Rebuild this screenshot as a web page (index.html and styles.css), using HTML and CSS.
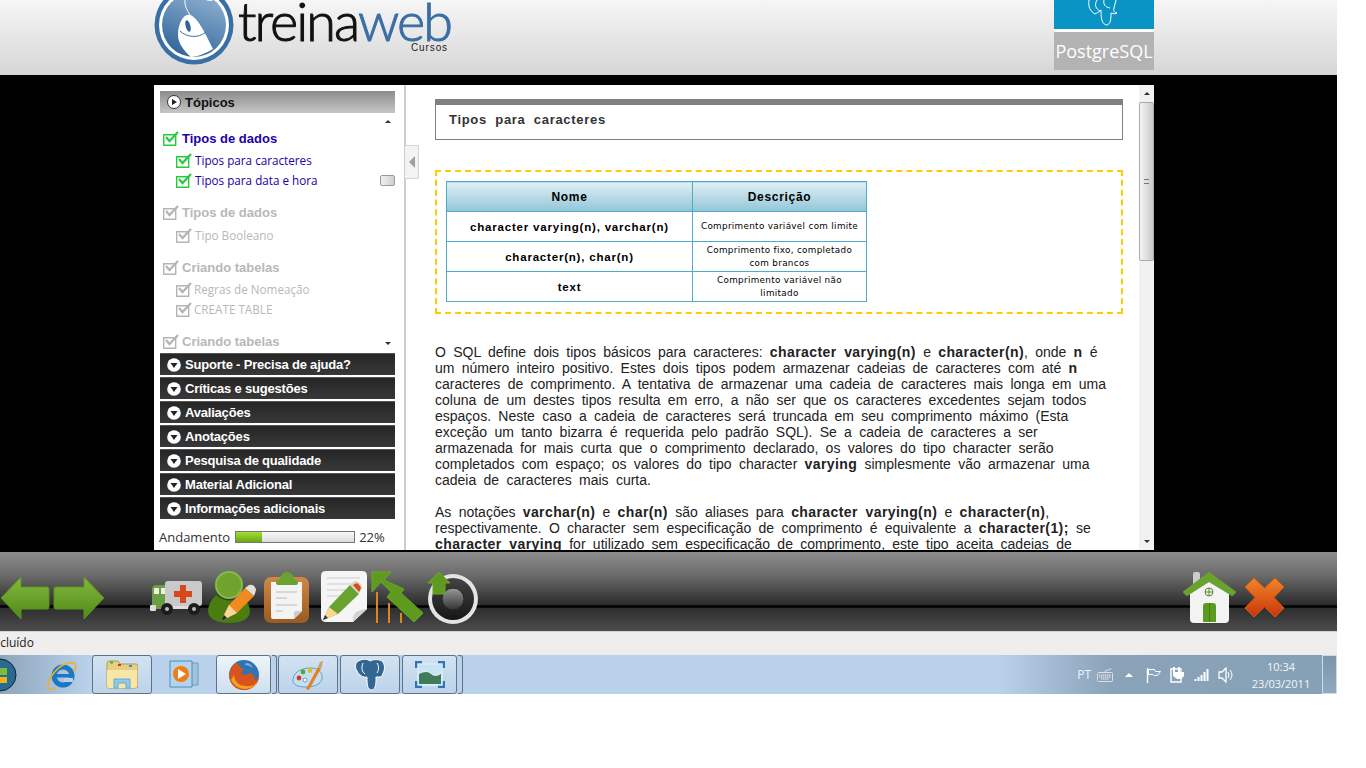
FILE: index.html
```html
<!DOCTYPE html>
<html lang="pt">
<head>
    <meta charset="UTF-8">
    <meta name="viewport" content="width=device-width, initial-scale=1.0">
    <title>TreinaWeb - PostgreSQL</title>
    <link rel="stylesheet" href="styles.css">
</head>
<body>
<svg class="sprites" aria-hidden="true">
    <symbol id="check" viewBox="0 0 16 15">
        <path d="M.7 3.700h12v10.600H.7z" fill="#fff" stroke="currentColor" stroke-width="1.400"/>
        <path d="M3 6 6.500 10 15 1" fill="none" stroke="currentColor" stroke-width="2.200"/>
    </symbol>
    <symbol id="round-right" viewBox="0 0 14 14">
        <circle cx="7" cy="7" r="6.500" fill="#fff" stroke="#333"/>
        <path d="M5 4v6l5-3z" fill="#222"/>
    </symbol>
    <symbol id="round-down" viewBox="0 0 14 14">
        <circle cx="7" cy="7" r="6.800" fill="#fff"/>
        <path d="M3.500 5h7L7 10z" fill="#222"/>
    </symbol>
</svg>

<div class="screen">
    <header class="site-header">
        <svg class="logo-mark" width="80" height="80" viewBox="0 0 80 80">
            <defs>
                <linearGradient id="logoBlue" x1="0.7" y1="0" x2="0.3" y2="1">
                    <stop offset="0" stop-color="#8fb0d0"/>
                    <stop offset="1" stop-color="#2f6499"/>
                </linearGradient>
            </defs>
            <circle cx="40" cy="40" r="39.500" fill="#3a6fa5"/>
            <circle cx="40" cy="40" r="35" fill="#fff"/>
            <circle cx="40" cy="40" r="32" fill="url(#logoBlue)"/>
            <path d="M24 50C24 38 30 28 36 30 44 32 52 50 59 64 52 68 44 72 37 72 30 66 24 58 24 50z" fill="#fff"/>
            <path d="M26 46C32 52 44 54 52 47" fill="none" stroke="#3a6fa5" stroke-width="1"/>
            <ellipse cx="34" cy="41" rx="2.400" ry="6" fill="#2f6499" transform="rotate(-15 34 41)"/>
            <path d="M36 30C28 18 30 10 38 8s14 12 22 6 0-14-2-14" fill="none" stroke="#fff" stroke-width="1"/>
        </svg>
        <div class="logo-text">
            <div class="logo-name">treina<span class="logo-web">web</span></div>
            <div class="logo-sub">Cursos</div>
        </div>
        <div class="course-badge">
            <div class="badge-top">
                <svg width="40" height="26" viewBox="0 0 40 26">
                    <path d="M5 0c-1 7 1 11 6 14 2-1 4-2 6-4 0 6 0 13 5 15 5 0 5-7 5-12 3 1 5 1 6 0-3-1-4-2-3-5l2-8M13 0c-3 5-1 9 3 11M20 0c-1 4 1 7 6 8" fill="none" stroke="#fff" stroke-width="1"/>
                </svg>
            </div>
            <div class="badge-name">PostgreSQL</div>
        </div>
    </header>

    <main class="stage">
        <div class="panel">
            <aside class="sidebar">
                <div class="topics-head">
                    <svg class="round-icon"><use href="#round-right"/></svg>Tópicos
                </div>
                <div class="topics">
                    <div class="topics-list">
                        <div class="topic topic-done">
                            <svg class="tick"><use href="#check"/></svg>Tipos de dados
                        </div>
                        <div class="subtopic topic-done">
                            <svg class="tick"><use href="#check"/></svg>Tipos para caracteres
                        </div>
                        <div class="subtopic subtopic-next topic-done">
                            <svg class="tick"><use href="#check"/></svg>Tipos para data e hora
                        </div>
                        <div class="topic topic-off topic-new">
                            <svg class="tick"><use href="#check"/></svg>Tipos de dados
                        </div>
                        <div class="subtopic topic-off topic-low">
                            <svg class="tick"><use href="#check"/></svg>Tipo Booleano
                        </div>
                        <div class="topic topic-off topic-new">
                            <svg class="tick"><use href="#check"/></svg>Criando tabelas
                        </div>
                        <div class="subtopic topic-off tight">
                            <svg class="tick"><use href="#check"/></svg>Regras de Nomeação
                        </div>
                        <div class="subtopic subtopic-next topic-off tight">
                            <svg class="tick"><use href="#check"/></svg>CREATE TABLE
                        </div>
                        <div class="topic topic-off topic-new">
                            <svg class="tick"><use href="#check"/></svg>Criando tabelas
                        </div>
                    </div>
                    <div class="topics-scroll">
                        <span class="arrow-up"></span>
                        <span class="topics-thumb"></span>
                        <span class="arrow-down"></span>
                    </div>
                </div>
                <div class="dark-row"><svg class="round-icon"><use href="#round-down"/></svg>Suporte - Precisa de ajuda?</div>
                <div class="dark-row"><svg class="round-icon"><use href="#round-down"/></svg>Críticas e sugestões</div>
                <div class="dark-row"><svg class="round-icon"><use href="#round-down"/></svg>Avaliações</div>
                <div class="dark-row"><svg class="round-icon"><use href="#round-down"/></svg>Anotações</div>
                <div class="dark-row"><svg class="round-icon"><use href="#round-down"/></svg>Pesquisa de qualidade</div>
                <div class="dark-row"><svg class="round-icon"><use href="#round-down"/></svg>Material Adicional</div>
                <div class="dark-row"><svg class="round-icon"><use href="#round-down"/></svg>Informações adicionais</div>
                <div class="progress">
                    <span>Andamento</span>
                    <div class="progress-bar"><div class="progress-fill" style="width: 22%"></div></div>
                    <span>22%</span>
                </div>
            </aside>

            <div class="collapse-tab"><span class="collapse-arrow"></span></div>

            <section class="content">
                <h1 class="lesson-title">Tipos para caracteres</h1>
                <div class="table-box">
                    <table class="types">
                        <tr><th>Nome</th><th>Descrição</th></tr>
                        <tr><td class="type-name">character varying(n), varchar(n)</td><td class="type-desc">Comprimento variável com limite</td></tr>
                        <tr><td class="type-name">character(n), char(n)</td><td class="type-desc">Comprimento fixo, completado com brancos</td></tr>
                        <tr><td class="type-name">text</td><td class="type-desc">Comprimento variável não limitado</td></tr>
                    </table>
                </div>
                <p class="lesson-text">O SQL define dois tipos básicos para caracteres: <b>character varying(n)</b> e <b>character(n)</b>, onde <b>n</b> é<br>
                um número inteiro positivo. Estes dois tipos podem armazenar cadeias de caracteres com até <b>n</b><br>
                caracteres de comprimento. A tentativa de armazenar uma cadeia de caracteres mais longa em uma<br>
                coluna de um destes tipos resulta em erro, a não ser que os caracteres excedentes sejam todos<br>
                espaços. Neste caso a cadeia de caracteres será truncada em seu comprimento máximo (Esta<br>
                exceção um tanto bizarra é requerida pelo padrão SQL). Se a cadeia de caracteres a ser<br>
                armazenada for mais curta que o comprimento declarado, os valores do tipo character serão<br>
                completados com espaço; os valores do tipo character <b>varying</b> simplesmente vão armazenar uma<br>
                cadeia de caracteres mais curta.</p>
                <p class="lesson-text">As notações <b>varchar(n)</b> e <b>char(n)</b> são aliases para <b>character varying(n)</b> e <b>character(n)</b>,<br>
                respectivamente. O character sem especificação de comprimento é equivalente a <b>character(1);</b> se<br>
                <b>character varying</b> for utilizado sem especificação de comprimento, este tipo aceita cadeias de</p>
            </section>

            <div class="content-scroll">
                <span class="arrow-up"></span>
                <span class="content-thumb"><span class="grip"></span></span>
                <span class="arrow-down"></span>
            </div>
        </div>
    </main>

    <nav class="toolbar">
        <svg class="tool tool-back" width="50" height="44" viewBox="0 0 50 44">
            <defs>
                <linearGradient id="green" x1="0" y1="0" x2="0" y2="1">
                    <stop offset="0" stop-color="#86b93f"/>
                    <stop offset="1" stop-color="#4d8a16"/>
                </linearGradient>
            </defs>
            <path d="M1 22 21 1v10h26q2 0 2 2v18q0 2-2 2H21v10z" fill="url(#green)" stroke="#5a9320" stroke-linejoin="round"/>
        </svg>
        <svg class="tool tool-next" width="52" height="44" viewBox="0 0 52 44">
            <path d="M51 22 31 1v10H3q-2 0-2 2v18q0 2 2 2h28v10z" fill="url(#green)" stroke="#5a9320" stroke-linejoin="round"/>
        </svg>
        <svg class="tool tool-truck" width="53" height="36" viewBox="0 0 53 36">
            <path d="M2 8q1-3 4-3h15v24H2z" fill="#6c9d45"/>
            <path d="M4 8h5v6H4zM11 8h5v6h-5z" fill="#e8f2dc"/>
            <rect x="15" y="1" width="37" height="25" rx="3" fill="#c9c9c9"/>
            <path d="M30 5h6v6h6v6h-6v6h-6v-6h-6v-6h6z" fill="#d9481a"/>
            <rect x="20" y="26" width="26" height="3" fill="#ddd"/>
            <rect x="0" y="25" width="6" height="6" rx="1" fill="#ddd"/>
            <circle cx="17" cy="29" r="6" fill="#1c1c1c"/><circle cx="17" cy="29" r="2" fill="#bbb"/>
            <circle cx="44" cy="29" r="6" fill="#1c1c1c"/><circle cx="44" cy="29" r="2" fill="#bbb"/>
        </svg>
        <svg class="tool tool-user" width="48" height="53" viewBox="0 0 48 53">
            <circle cx="21" cy="14" r="13" fill="#6fa32e" stroke="#86bb45" stroke-width="2"/>
            <path d="M8 24Q0 32 0 40q1 12 21 12t21-12q0-8-9-14-12 8-25-2z" fill="#4a7d10"/>
            <path d="M13 50 21 34 37 17l9 8-17 17z" fill="#f18b21"/>
            <path d="M37 17l4-3q3-1 5 1l2 3q0 3-2 7z" fill="#e4e0d4"/>
            <path d="M13 50 21 34 29 42z" fill="#f7d69a"/>
            <path d="M13 50l3-6 3 3z" fill="#222"/>
        </svg>
        <svg class="tool tool-clip" width="45" height="51" viewBox="0 0 45 51">
            <defs>
                <linearGradient id="brown" x1="0" y1="0" x2="0" y2="1">
                    <stop offset="0" stop-color="#cf8745"/>
                    <stop offset="1" stop-color="#9c5a20"/>
                </linearGradient>
            </defs>
            <rect x="0" y="5" width="45" height="46" rx="7" fill="url(#brown)"/>
            <path d="M7 10h31v29l-8 8H9q-2 0-2-2z" fill="#f3f3f3"/>
            <path d="M30 47v-6q0-2 2-2h6z" fill="#ccc"/>
            <path d="M12 20h21M12 26h11M12 33h21M12 39h7" stroke="#bbb"/>
            <path d="M12 11q0-3 4-4 1-7 7-7t7 7q4 1 4 4 0 2-3 2H15q-3 0-3-2z" fill="#6aa22f"/>
        </svg>
        <svg class="tool tool-note" width="46" height="52" viewBox="0 0 46 52">
            <path d="M5 0h36q5 0 5 5v33L32 51H5q-5 0-5-5V5q0-5 5-5z" fill="#f5f5f5"/>
            <path d="M32 51q-2-12 14-13z" fill="#d4d4d4"/>
            <path d="M6 7h33M6 13h33M6 19h24M6 25h18" stroke="#ccc"/>
            <path d="M2 49 8 36 29 14l9 9-21 20z" fill="#6aa22f"/>
            <path d="M29 14l3-3q3-2 5 0l3 3q2 3 0 5l-2 4z" fill="#d9d2c2"/>
            <path d="M36 12l3 3 1 2-2 4-6-7z" fill="#d9481a"/>
            <path d="M2 49 8 36 17 43z" fill="#f9d890"/>
            <path d="M2 49l2-5 3 3z" fill="#333"/>
        </svg>
        <svg class="tool tool-stats" width="53" height="53" viewBox="0 0 53 53">
            <path d="M6 21V52M18 32V52M30 42V52" stroke="#dd8520" stroke-width="2"/>
            <path d="M1 1H20L13 9 33 18 30 22 52 42 43 51 16 26 20 21 10 11 1 21z" fill="#5e9a1e" stroke="#6aa62a" stroke-linejoin="round"/>
        </svg>
        <svg class="tool tool-sound" width="51" height="52" viewBox="0 0 51 52">
            <defs>
                <linearGradient id="cone" x1="0" y1="0" x2="0" y2="1">
                    <stop offset="0" stop-color="#444"/>
                    <stop offset="1" stop-color="#161616"/>
                </linearGradient>
                <linearGradient id="capGrad" x1="0" y1="0" x2="0" y2="1">
                    <stop offset="0" stop-color="#9a9a9a"/>
                    <stop offset="1" stop-color="#333"/>
                </linearGradient>
            </defs>
            <circle cx="26" cy="27" r="25" fill="#e4e4e4"/>
            <circle cx="26" cy="27" r="21" fill="url(#cone)"/>
            <circle cx="26" cy="27" r="11" fill="url(#capGrad)" stroke="#222"/>
            <path d="M12 0l11 11h-5v11H6V11H1z" fill="#5e9a1e" stroke="#6aa62a" stroke-linejoin="round"/>
        </svg>
        <svg class="tool tool-home" width="53" height="51" viewBox="0 0 53 51">
            <rect x="10" y="0" width="7" height="14" rx="2" fill="#ccc"/>
            <path d="M7 18 26 5l20 13v29q0 4-4 4H11q-4 0-4-4z" fill="#f3f3f3"/>
            <path d="M1 20 26 1 52 20 49 23 26 9 4 23z" fill="#6aa22f" stroke="#6aa22f" stroke-width="2" stroke-linejoin="round"/>
            <path d="M20 50V34q0-3 3-3h7q3 0 3 3v16z" fill="#5e9a1e"/>
            <path d="M26.500 31V50" stroke="#3f7a12"/>
            <circle cx="26" cy="20" r="4" fill="#f3f3f3" stroke="#5e8a2e"/>
            <path d="M26 16v8M22 20h8" stroke="#5e8a2e"/>
        </svg>
        <svg class="tool tool-close" width="41" height="41" viewBox="0 0 41 41">
            <defs>
                <linearGradient id="redx" x1="0" y1="0" x2="0" y2="1">
                    <stop offset="0" stop-color="#f0862a"/>
                    <stop offset="1" stop-color="#c93508"/>
                </linearGradient>
            </defs>
            <path d="M10 1 20.500 11 31 1l9 9-10 10.500L40 31l-9 9-10.500-10L10 40l-9-9 10-10.500L1 10z" fill="url(#redx)" stroke="#d55a12" stroke-linejoin="round"/>
        </svg>
    </nav>

    <div class="status-bar"><span class="status-text">Concluído</span></div>

    <footer class="taskbar">
        <svg class="orb" width="17" height="36" viewBox="0 0 17 36">
            <circle cx="0" cy="18" r="16" fill="#2b6a90" stroke="#123" stroke-width="1"/>
            <path d="M-8 10h6v7h-6zM-1 11h8v7h-8z" fill="#7dbb3c"/>
            <path d="M-8 19h6v7h-6z" fill="#3a8fd6"/>
            <path d="M0 20h7v6H0z" fill="#f3b21c"/>
        </svg>
        <svg class="task-ie" width="30" height="32" viewBox="0 0 30 32">
            <circle cx="16" cy="17" r="9" fill="none" stroke="#1d78c4" stroke-width="5"/>
            <rect x="9" y="15" width="15" height="3.500" fill="#1d78c4"/>
            <rect x="17" y="19" width="9" height="4" fill="#b9d1ea"/>
            <path d="M25 4C16 3 3 14 1 26c-1 4 2 5 8 3M25 4c4-1 5 3 2 9" fill="none" stroke="#eab22e" stroke-width="1.600"/>
        </svg>
        <div class="task-btn task-folder">
            <svg width="32" height="30" viewBox="0 0 32 30">
                <path d="M1 3q0-2 2-2h9l2 3h16q2 0 2 2v20q0 2-2 2H3q-2 0-2-2z" fill="#e8cf84" stroke="#b49a52"/>
                <path d="M4 1.500h3v2H4z" fill="#32b04a"/><path d="M12 4h3v2h-3z" fill="#d0382a"/><path d="M23 5h3v2h-3z" fill="#2f8ed8"/>
                <path d="M1 10h30v16q0 2-2 2H3q-2 0-2-2z" fill="#f7e6a8"/>
                <path d="M8 28v-9h16v9h-4v-5h-8v5z" fill="#8fcbe8" stroke="#6ba9ca"/>
            </svg>
        </div>
        <div class="task-media">
            <svg width="30" height="30" viewBox="0 0 30 30">
                <path d="M7 3h22v22H7z" fill="#a3c4de" stroke="#6e9cc0"/>
                <path d="M1 1h22v26H1z" fill="#b5d3ea" stroke="#4b8dbe"/>
                <circle cx="12" cy="14" r="8" fill="#ef7c16"/>
                <path d="M9 9v10l8-5z" fill="#fff"/>
            </svg>
        </div>
        <div class="task-btn task-active task-fox">
            <svg width="32" height="32" viewBox="0 0 32 32">
                <circle cx="16" cy="16" r="15" fill="#2f75b5"/>
                <path d="M9 3C3 7 0 14 2 21c2 7 9 10 14 10 8 0 15-6 15-14-1 3-3 4-4 4 0-4-2-6-5-7-2 2-6 2-8 1-1-3 1-5 3-5-4-1-7-3-8-7z" fill="#d9531e"/>
                <path d="M3 21c3 6 9 9 14 9 6 0 11-3 13-8-3 4-7 6-12 5-6 0-11-3-12-11z" fill="#f6a21c"/>
                <path d="M18 4c3 0 6 2 7 5-3-2-5-3-8-3z" fill="#7fb6e0"/>
            </svg>
        </div>
        <div class="task-sliver"></div>
        <div class="task-btn task-paint">
            <svg width="32" height="30" viewBox="0 0 32 30">
                <path d="M1 19C2 11 11 8 19 8c8 0 12 5 11 11-1 5-8 8-16 8S0 25 1 19z" fill="#c5dff2" stroke="#6a9cc0"/>
                <circle cx="7" cy="18" r="2.400" fill="#d33a2a"/><circle cx="11" cy="12" r="2.400" fill="#4bab3a"/>
                <circle cx="18" cy="10.500" r="2.400" fill="#e8b62a"/><circle cx="13" cy="20" r="2" fill="#fff" stroke="#6a9cc0"/>
                <path d="M14 29 26 7l3 1.500L17 30z" fill="#e6811f"/>
                <path d="M26 7l2-5 3-1-1 5-1 2.500z" fill="#c9a56b"/>
            </svg>
        </div>
        <div class="task-btn task-pg">
            <svg width="32" height="32" viewBox="0 0 32 32">
                <path d="M3 3C8-1 14 0 16 2c4-2 10-2 13 1 3 5 1 11-2 15l-5 0c0 6 0 12-4 13-5 0-5-6-5-13-4 1-8-2-10-6-2-3-2-7 0-9z" fill="#336791" stroke="#fff"/>
                <path d="M9 4c-2 5-1 9 2 11M23 4c2 3 2 7 0 10" fill="none" stroke="#fff"/>
            </svg>
        </div>
        <div class="task-btn task-photos">
            <svg width="30" height="27" viewBox="0 0 30 27">
                <rect x="2" y="2" width="26" height="23" fill="#d8eaf5"/>
                <path d="M4 13q8-4 12 0t10 0v10H4z" fill="#3f7d5a"/>
                <path d="M4 4h22v8q-8 3-12-1t-10 1z" fill="#c8e4f2"/>
                <path d="M1 7V1h6M23 1h6v6M29 20v6h-6M7 26H1v-6" fill="none" stroke="#2e75b6" stroke-width="2.400"/>
            </svg>
        </div>
        <div class="task-sliver"></div>

        <div class="tray">
            <span class="tray-lang">PT</span>
            <svg class="tray-keys" width="16" height="14" viewBox="0 0 16 14">
                <path d="M8 4q0-2 3-2t3-2" fill="none" stroke="#dde"/>
                <rect x="0.500" y="4.500" width="15" height="9" rx="1" fill="#8ea2b4" stroke="#dde"/>
                <path d="M2 7h12M2 9h12M4 11h8" stroke="#eef" stroke-dasharray="1.500 .5"/>
            </svg>
            <span class="tray-up"></span>
            <svg class="tray-flag" width="16" height="16" viewBox="0 0 16 16">
                <path d="M1.500 1v15" stroke="#fff" stroke-width="1.400"/>
                <path d="M2.500 2.500h6l1 2h5l-3 4H8l-1-1H2.500z" fill="#8ea6bb" stroke="#fff"/>
            </svg>
            <svg class="tray-plug" width="15" height="17" viewBox="0 0 15 17">
                <path d="M1 3h10v13H1z" fill="none" stroke="#fff" stroke-width="1.400"/>
                <path d="M4 1v5M9 1v5" stroke="#fff" stroke-width="2"/>
                <path d="M3 6h11v4l-3 3H7l-4-3z" fill="#fff"/>
            </svg>
            <svg class="tray-signal" width="16" height="14" viewBox="0 0 16 14">
                <path d="M1.500 13v-2M4.500 13V9M7.500 13V7M10.500 13V4M13.500 13V1" stroke="#fff" stroke-width="2"/>
            </svg>
            <svg class="tray-sound" width="16" height="16" viewBox="0 0 16 16">
                <path d="M1 5h3l4-4v14l-4-4H1z" fill="none" stroke="#fff" stroke-width="1.300"/>
                <path d="M10 5q2 3 0 6M12 3q4 5 0 10" fill="none" stroke="#fff"/>
            </svg>
            <div class="clock"><div>10:34</div><div>23/03/2011</div></div>
        </div>
        <div class="show-desktop"></div>
    </footer>
</div>
</body>
</html>
```

FILE: styles.css
```css
html, body {
    margin: 0;
    padding: 0;
    background-color: white;
}
.sprites {
    position: absolute;
    width: 0;
    height: 0;
}
.screen {
    width: 1337px;
    height: 694px;
    overflow: hidden;
    font-family: "Liberation Sans", Arial, sans-serif;
}

/* header */
.site-header {
    display: flex;
    height: 75px;
    padding: 0 183px 0 154px;
    box-sizing: border-box;
    overflow: hidden;
    background: linear-gradient(#f6f6f6, #d6d6d6);
}
.logo-mark {
    flex: none;
    margin-top: -15px;
}
.logo-text {
    width: 212px;
    margin-left: 4px;
}
.logo-name {
    font-family: Lato, sans-serif;
    font-weight: 300;
    font-size: 54px;
    line-height: 42px;
    height: 42px;
    letter-spacing: -2px;
    white-space: nowrap;
    color: #111;
    -webkit-text-stroke: 1px #111;
}
.logo-web {
    color: #3b6ea5;
    -webkit-text-stroke: 1px #3b6ea5;
}
.logo-sub {
    font-size: 10px;
    line-height: 11px;
    letter-spacing: 0.900px;
    text-align: right;
    padding-right: 2px;
    color: #222;
}
.course-badge {
    width: 100px;
    margin-left: auto;
}
.badge-top {
    height: 29px;
    background-color: #0a94c6;
    text-align: center;
    border-bottom: 3px solid white;
}
.badge-name {
    height: 38px;
    line-height: 38px;
    background-color: #b3b3b3;
    color: white;
    font-family: "Open Sans", sans-serif;
    font-size: 18px;
    text-align: center;
    white-space: nowrap;
}

/* middle */
.stage {
    height: 477px;
    padding: 10px 183px 2px 154px;
    box-sizing: border-box;
    background-color: black;
}
.panel {
    position: relative;
    display: flex;
    height: 465px;
    background-color: white;
    overflow: hidden;
}
.sidebar {
    flex: none;
    width: 252px;
    box-sizing: border-box;
    padding: 6px 9px 0 6px;
    border-right: 2px solid #ccc;
}
.topics-head {
    display: flex;
    align-items: center;
    height: 22px;
    padding-left: 7px;
    background: linear-gradient(#8c8c8c, #c6c6c6);
    font-size: 13px;
    font-weight: bold;
    color: #111;
}
.round-icon {
    width: 14px;
    height: 14px;
    margin-right: 4px;
    flex: none;
}
.topics {
    display: flex;
    height: 239px;
    overflow: hidden;
}
.topics-list {
    flex: 1;
    padding-top: 15px;
    padding-left: 3px;
}
.topic {
    display: flex;
    align-items: center;
    height: 20px;
    font-size: 13px;
    font-weight: bold;
    white-space: nowrap;
}
.topic-new {
    margin-top: 12px;
}
.subtopic {
    display: flex;
    align-items: center;
    height: 20px;
    margin-top: 2px;
    padding-left: 13px;
    font-family: "Open Sans", sans-serif;
    font-size: 11.700px;
    white-space: nowrap;
}
.subtopic-next {
    margin-top: 0;
}
.topic-low {
    margin-top: 3px;
}
.topic-done {
    color: #2200a8;
}
.topic-off {
    color: #b8b8b8;
}
.tick {
    width: 16px;
    height: 15px;
    margin-right: 3px;
    color: #b4b4b4;
    flex: none;
}
.topic-done .tick {
    color: #27c93f;
}
.tight .tick {
    margin-right: 2px;
}
.topics-scroll, .content-scroll {
    display: flex;
    flex-direction: column;
    align-items: center;
    flex: none;
    width: 15px;
}
.arrow-up, .arrow-down {
    width: 0;
    height: 0;
    border-left: 3px solid transparent;
    border-right: 3px solid transparent;
}
.arrow-up {
    border-bottom: 3px solid #333;
}
.arrow-down {
    border-top: 3px solid #333;
    margin-top: auto;
    margin-bottom: 7px;
}
.topics-scroll .arrow-up {
    margin-top: 7px;
}
.topics-thumb {
    width: 13px;
    height: 9px;
    margin-top: 52px;
    border: 1px solid #9a9a9a;
    border-radius: 2px;
    background: linear-gradient(90deg, #f0f0f0, #cfcfcf);
}
.dark-row {
    display: flex;
    align-items: center;
    height: 22px;
    margin-bottom: 2px;
    padding-left: 7px;
    background: linear-gradient(#262626, #383838);
    border-top: 1px solid #555;
    box-sizing: border-box;
    font-size: 13px;
    font-weight: bold;
    letter-spacing: -0.200px;
    color: white;
}
.topics + .dark-row {
    margin-top: 1px;
}
.progress {
    display: flex;
    align-items: center;
    gap: 4px;
    margin: 9px 0 0 -1px;
    font-family: "Open Sans", sans-serif;
    font-size: 13px;
    color: #333;
}
.progress-bar {
    width: 120px;
    height: 12px;
    margin-left: 1px;
    box-sizing: border-box;
    border: 1px solid #777;
    background: linear-gradient(#f8f8f8, #dcdcdc);
}
.progress-fill {
    height: 100%;
    background: linear-gradient(#a6dc3c, #6aa80c);
}
.collapse-tab {
    position: absolute;
    left: 251px;
    top: 60px;
    display: flex;
    align-items: center;
    justify-content: center;
    width: 13px;
    height: 32px;
    background-color: #f3f3f3;
    border: 1px solid #d4d4d4;
    border-left: none;
}
.collapse-arrow {
    width: 0;
    height: 0;
    border-top: 6px solid transparent;
    border-bottom: 6px solid transparent;
    border-right: 6px solid #a0a0a0;
}

/* lesson */
.content {
    flex: 1;
    min-width: 0;
    padding: 14px 16px 0 29px;
    overflow: hidden;
}
.lesson-title {
    height: 34px;
    margin: 0;
    padding-left: 13px;
    border: 1px solid #808080;
    border-top: 6px solid #808080;
    font-size: 13px;
    line-height: 29px;
    font-weight: bold;
    letter-spacing: 0.700px;
    word-spacing: 4px;
    color: #333;
}
.table-box {
    height: 144px;
    box-sizing: border-box;
    margin-top: 30px;
    padding: 9px;
    border: 2px dashed #ffcc00;
}
.types {
    width: 421px;
    border-collapse: collapse;
    color: black;
}
.types th, .types td {
    height: 29px;
    padding: 0;
    border: 1px solid #4facc9;
    text-align: center;
}
.types th {
    background: linear-gradient(#e0f0f5, #92c6d8);
    font-size: 12px;
    letter-spacing: 0.700px;
}
.type-name {
    width: 245px;
    font-size: 11.500px;
    font-weight: bold;
    letter-spacing: 0.800px;
}
.type-desc {
    font-family: "DejaVu Sans", sans-serif;
    font-size: 8.800px;
    line-height: 13px;
    letter-spacing: 0.320px;
    padding: 0 6px !important;
}
.lesson-text {
    margin: 0 0 16px;
    font-size: 14px;
    line-height: 16px;
    word-spacing: 3.400px;
    white-space: nowrap;
    color: #222;
}
.lesson-text b {
    letter-spacing: 0.400px;
}
.table-box + .lesson-text {
    margin-top: 30px;
}
.content-scroll {
    background-color: #f1f1f1;
}
.content-scroll .arrow-up {
    margin-top: 7px;
}
.content-thumb {
    display: flex;
    align-items: center;
    justify-content: center;
    width: 13px;
    height: 157px;
    margin-top: 7px;
    border: 1px solid #aaa;
    border-radius: 2px;
    background: linear-gradient(90deg, #f4f4f4, #c9c9c9);
}
.grip {
    width: 5px;
    height: 5px;
    border-top: 1px solid #777;
    border-bottom: 1px solid #777;
    box-sizing: border-box;
}

/* bottom toolbar */
.toolbar {
    display: flex;
    align-items: flex-start;
    height: 80px;
    box-sizing: border-box;
    border-bottom: 1px solid #d4d4d4;
    background: linear-gradient(#8e8e8e 0, #6a6a6a 30%, #2b2b2b 67%, #000 68%, #000 70%, #2e2e2e 71%, #4c4c4c 100%);
}
.tool {
    flex: none;
}
.tool-back { margin-top: 24px; }
.tool-next { margin: 24px 0 0 3px; }
.tool-truck { margin: 28px 0 0 45px; }
.tool-user { margin: 19px 0 0 5px; }
.tool-clip { margin: 20px 0 0 8px; }
.tool-note { margin: 19px 0 0 12px; }
.tool-stats { margin: 19px 0 0 4px; }
.tool-sound { margin: 20px 0 0 3px; }
.tool-home { margin: 20px 0 0 auto; }
.tool-close { margin: 25px 52px 0 8px; }

.status-bar {
    height: 22px;
    line-height: 22px;
    background-color: #f0eded;
    font-family: "Open Sans", sans-serif;
    font-size: 12px;
    color: #222;
    overflow: hidden;
}
.status-text {
    display: inline-block;
    margin-left: -22px;
}

/* windows taskbar */
.taskbar {
    display: flex;
    align-items: center;
    height: 40px;
    box-sizing: border-box;
    border-top: 1px solid #e8eef4;
    background: linear-gradient(90deg, #8ea6bb 0, #b9d1ea 90px, #b9d1ea 1000px, #8aa3b9 1110px, #86a0b6 100%);
}
.orb { margin-right: 30px; }
.task-ie { margin-right: 15px; }
.task-btn {
    display: flex;
    align-items: center;
    justify-content: center;
    box-sizing: border-box;
    height: 39px;
    border: 1px solid #5f7386;
    border-radius: 3px;
    background: linear-gradient(#d2e2f1, #bcd3ea);
    flex: none;
}
.task-folder { width: 60px; }
.task-media {
    display: flex;
    justify-content: center;
    width: 64px;
}
.task-active {
    background: linear-gradient(#eef4fa, #cfdfef);
}
.task-fox { width: 55px; }
.task-sliver {
    width: 5px;
    height: 39px;
    margin: 0 1px;
    border: 1px solid #5f7386;
    border-left: none;
    border-radius: 0 3px 3px 0;
    box-sizing: border-box;
}
.task-paint { width: 60px; }
.task-pg { width: 60px; margin-left: 2px; }
.task-photos { width: 55px; margin-left: 2px; }
.tray {
    display: flex;
    align-items: center;
    margin-left: auto;
    color: white;
}
.tray-lang {
    font-family: "Open Sans", sans-serif;
    font-size: 12px;
    margin-right: 6px;
    color: #eef3f8;
}
.tray-keys { margin-right: 12px; }
.tray-up {
    width: 0;
    height: 0;
    border-left: 4px solid transparent;
    border-right: 4px solid transparent;
    border-bottom: 4px solid white;
    margin-right: 13px;
}
.tray-flag { margin-right: 8px; }
.tray-plug { margin-right: 9px; }
.tray-signal { margin-right: 8px; }
.tray-sound { margin-right: 17px; }
.clock {
    width: 60px;
    font-family: "Open Sans", sans-serif;
    font-size: 11px;
    line-height: 17px;
    text-align: center;
    white-space: nowrap;
    color: #f4f7fa;
}
.show-desktop {
    width: 15px;
    height: 39px;
    margin-left: 11px;
    box-sizing: border-box;
    border: 1px solid #cfdbe6;
    background: linear-gradient(#7b95ab, #90a9be);
}
```
